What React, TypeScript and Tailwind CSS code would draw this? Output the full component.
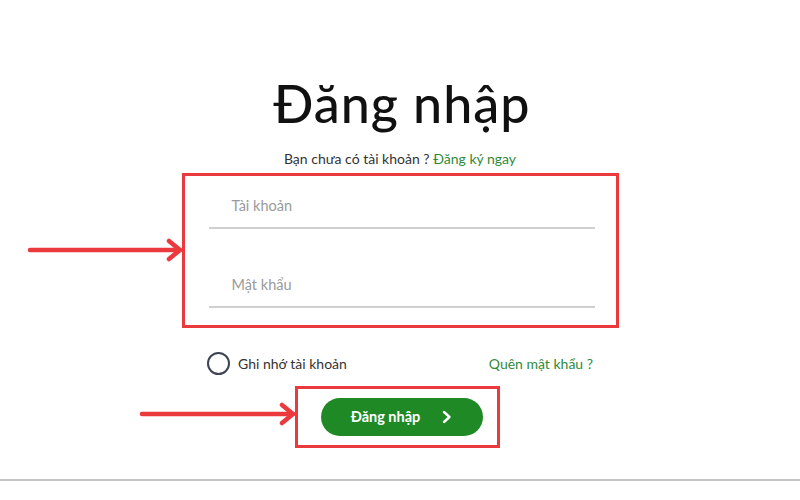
import React from "react";

const RED = "#eb3a3d";

function Arrow({ left, top, width }: { left: number; top: number; width: number }) {
  return (
    <svg
      className="absolute"
      style={{ left, top: top - 12 }}
      width={width}
      height={24}
      viewBox={`0 0 ${width} 24`}
    >
      <line x1={3} y1={12} x2={width - 3} y2={12} stroke={RED} strokeWidth={4.5} strokeLinecap="round" />
      <polyline
        points={`${width - 14},3 ${width - 3},12 ${width - 14},21`}
        fill="none"
        stroke={RED}
        strokeWidth={4.5}
        strokeLinecap="round"
        strokeLinejoin="round"
      />
    </svg>
  );
}

export default function App() {
  return (
    <div
      className="relative w-[800px] h-[500px] bg-white overflow-hidden flex flex-col items-center"
      style={{ fontFamily: "Lato, 'Noto Sans', sans-serif" }}
    >
      <h1 className="mt-[78px] ml-[4px] text-[52px] leading-[50px] font-medium text-[#111] tracking-[1px]">
        Đăng nhập
      </h1>
      <p className="mt-[22px] text-[14px] leading-[18px] text-[#333]">
        Bạn chưa có tài khoản ? <span className="text-[#2f8a3c]">Đăng ký ngay</span>
      </p>

      <div className="mt-[5px] w-[437px] h-[155px] border-[3px] border-[#eb3a3d] pl-[24px] pr-[21px] pt-[10px]">
        <div className="h-[43px] border-b-2 border-[#d0d0d0] flex items-center pl-[23px] pb-[2px] text-[14.5px] text-[#9a9a9a]">
          Tài khoản
        </div>
        <div className="mt-[36px] h-[43px] border-b-2 border-[#d0d0d0] flex items-center pl-[23px] pb-[2px] text-[14.5px] text-[#9a9a9a]">
          Mật khẩu
        </div>
      </div>

      <div className="mt-[24px] w-[386px] flex items-center justify-between">
        <div className="flex items-center gap-[8px]">
          <div className="w-[23px] h-[23px] rounded-full border-2 border-[#3d4352]" />
          <span className="text-[14px] text-[#333]">Ghi nhớ tài khoản</span>
        </div>
        <span className="text-[14px] text-[#2f8a3c]">Quên mật khẩu ?</span>
      </div>

      <div className="mt-[11px] mr-[6px] w-[205px] h-[62px] border-[3px] border-[#eb3a3d] flex items-center justify-center">
        <button className="w-[162px] h-[38px] rounded-full bg-[#1f8a25] text-white flex items-center justify-center gap-[22px] ml-[9px]">
          <span className="text-[14.5px] font-bold">Đăng nhập</span>
          <svg width="10" height="14" viewBox="0 0 10 14">
            <polyline points="2,2 7.5,7 2,12" fill="none" stroke="white" strokeWidth="2.4" strokeLinecap="round" strokeLinejoin="round" />
          </svg>
        </button>
      </div>

      <div className="mt-[31px] w-full border-t-2 border-[#c4c4c4]" />

      <Arrow left={27} top={250} width={156} />
      <Arrow left={139} top={414} width={157} />
    </div>
  );
}
